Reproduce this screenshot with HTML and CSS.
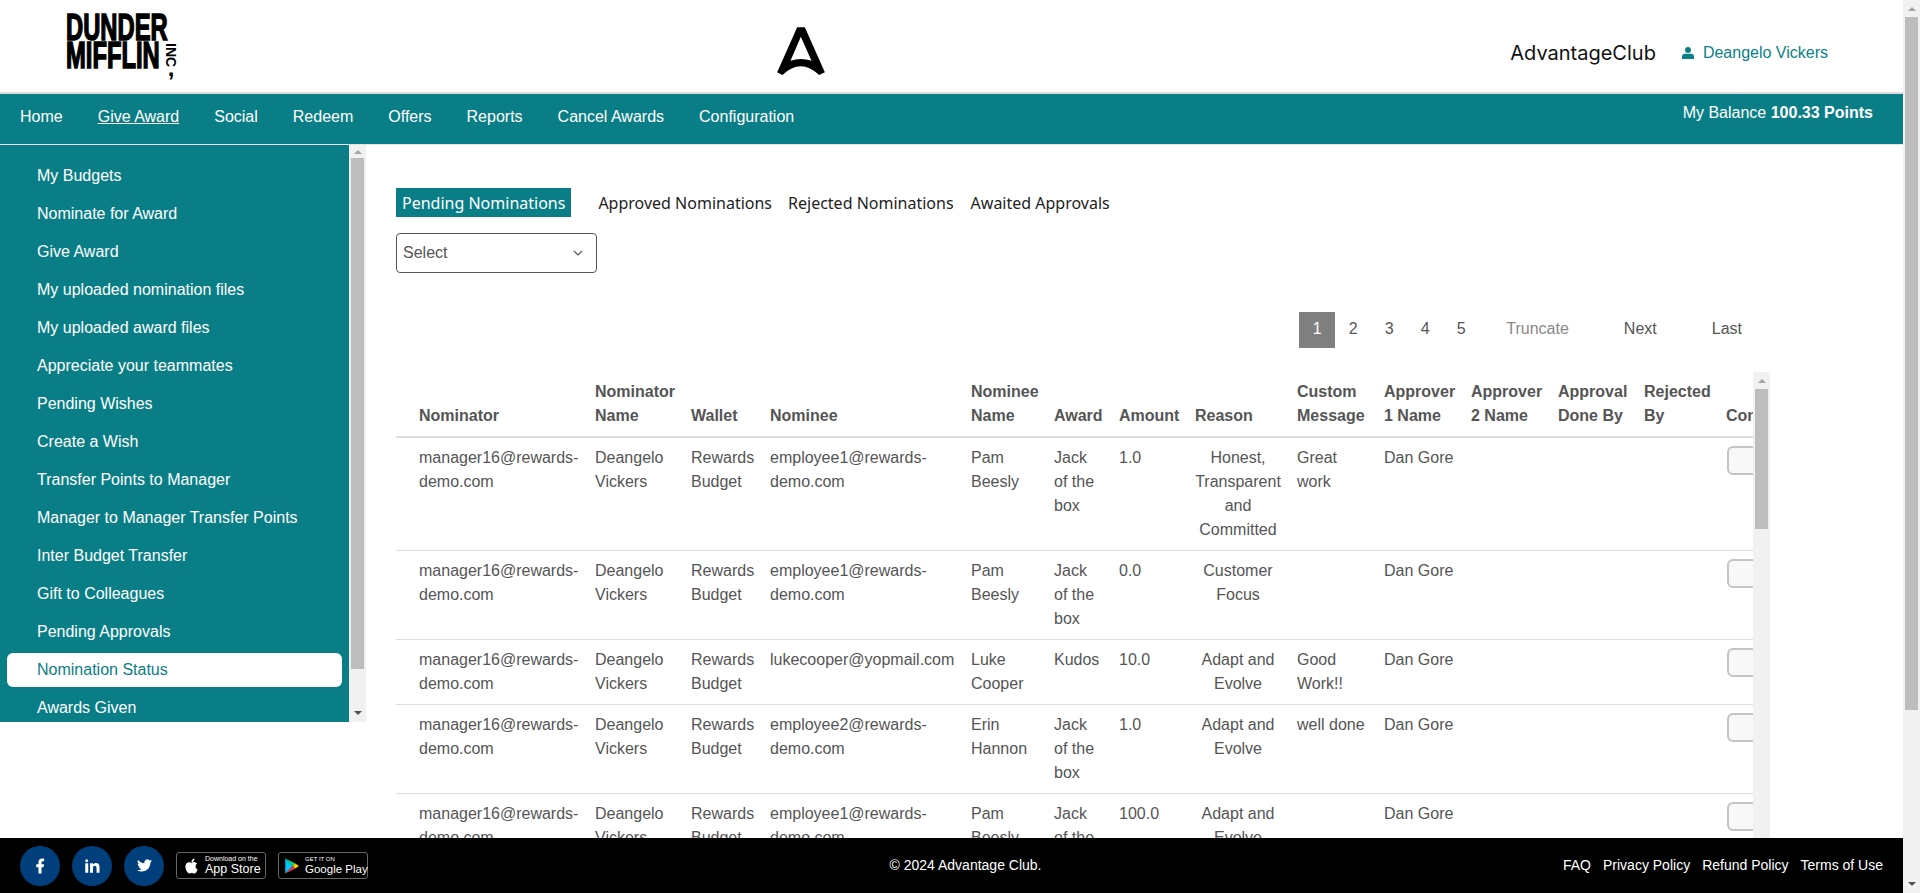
FILE: index.html
```html
<!DOCTYPE html>
<html lang="en">

<head>
    <meta charset="UTF-8">
    <meta name="viewport" content="width=device-width, initial-scale=1.0">
    <title>Nomination Status</title>
    <link rel="stylesheet" href="styles.css">
</head>

<body>
    <div class="page">
        <header class="top-bar">
            <div class="company-logo">
                <div class="company-words">
                    <span class="company-line">DUNDER MIFFLIN</span>
                </div>
                <div class="company-side">
                    <span class="company-inc">INC</span>
                    <span class="company-comma">,</span>
                </div>
            </div>
            <svg class="brand-mark" viewBox="40 40 170 165" aria-hidden="true">
                <path fill-rule="evenodd" d="M112 50H135L195 185L178 193Q150 167 123 167Q95 167 68 193L52 185ZM123 78L92 150Q123 140 155 150Z" />
            </svg>
            <div class="top-right">
                <span class="brand-name">AdvantageClub</span>
                <span class="user-name">
                    <svg class="user-icon" viewBox="0 0 12 12" aria-hidden="true">
                        <circle cx="6" cy="3" r="3" />
                        <path d="M0 12V9.500C0 7.800 1.300 6.700 3 6.700H9C10.700 6.700 12 7.800 12 9.500V12Z" />
                    </svg>
                    Deangelo Vickers
                </span>
            </div>
        </header>

        <nav class="main-nav">
            <div class="nav-links">
                <a>Home</a>
                <a class="current">Give Award</a>
                <a>Social</a>
                <a>Redeem</a>
                <a>Offers</a>
                <a>Reports</a>
                <a>Cancel Awards</a>
                <a>Configuration</a>
            </div>
            <div class="balance">My Balance <b>100.33 Points</b></div>
        </nav>

        <div class="content">
            <aside class="side">
                <ul class="side-menu">
                    <li>My Budgets</li>
                    <li>Nominate for Award</li>
                    <li>Give Award</li>
                    <li>My uploaded nomination files</li>
                    <li>My uploaded award files</li>
                    <li>Appreciate your teammates</li>
                    <li>Pending Wishes</li>
                    <li>Create a Wish</li>
                    <li>Transfer Points to Manager</li>
                    <li>Manager to Manager Transfer Points</li>
                    <li>Inter Budget Transfer</li>
                    <li>Gift to Colleagues</li>
                    <li>Pending Approvals</li>
                    <li class="active">Nomination Status</li>
                    <li>Awards Given</li>
                </ul>
                <div class="scrollbar side-scroll">
                    <span class="arrow-up"></span>
                    <span class="thumb"></span>
                    <span class="arrow-down"></span>
                </div>
            </aside>

            <main class="main">
                <div class="tabs">
                    <a class="tab active">Pending Nominations</a>
                    <a class="tab">Approved Nominations</a>
                    <a class="tab">Rejected Nominations</a>
                    <a class="tab">Awaited Approvals</a>
                </div>

                <div class="select-box">
                    <span>Select</span>
                    <svg class="chevron" viewBox="0 0 10 6" aria-hidden="true">
                        <path d="M1 1L5 5L9 1" />
                    </svg>
                </div>

                <div class="pager">
                    <a class="page-num on">1</a>
                    <a class="page-num">2</a>
                    <a class="page-num">3</a>
                    <a class="page-num">4</a>
                    <a class="page-num">5</a>
                    <a class="page-word truncate">Truncate</a>
                    <a class="page-word next">Next</a>
                    <a class="page-word last">Last</a>
                </div>

                <div class="table-box">
                    <div class="table-view">
                        <table class="noms">
                            <colgroup>
                                <col class="c1"><col class="c2"><col class="c3"><col class="c4"><col class="c5"><col class="c6"><col class="c7"><col class="c8"><col class="c9"><col class="c10"><col class="c11"><col class="c12"><col class="c13"><col class="c14">
                            </colgroup>
                            <thead>
                                <tr>
                                    <th>Nominator</th>
                                    <th>Nominator Name</th>
                                    <th>Wallet</th>
                                    <th>Nominee</th>
                                    <th>Nominee Name</th>
                                    <th>Award</th>
                                    <th>Amount</th>
                                    <th>Reason</th>
                                    <th>Custom Message</th>
                                    <th>Approver 1 Name</th>
                                    <th>Approver 2 Name</th>
                                    <th>Approval Done By</th>
                                    <th>Rejected By</th>
                                    <th>Confirm</th>
                                </tr>
                            </thead>
                            <tbody>
                                <tr>
                                    <td>manager16@rewards-demo.com</td>
                                    <td>Deangelo Vickers</td>
                                    <td>Rewards Budget</td>
                                    <td>employee1@rewards-demo.com</td>
                                    <td>Pam Beesly</td>
                                    <td>Jack of the box</td>
                                    <td>1.0</td>
                                    <td class="reason">Honest, Transparent and Committed</td>
                                    <td>Great work</td>
                                    <td>Dan Gore</td>
                                    <td></td>
                                    <td></td>
                                    <td></td>
                                    <td><button class="row-btn" aria-label="Confirm"></button></td>
                                </tr>
                                <tr>
                                    <td>manager16@rewards-demo.com</td>
                                    <td>Deangelo Vickers</td>
                                    <td>Rewards Budget</td>
                                    <td>employee1@rewards-demo.com</td>
                                    <td>Pam Beesly</td>
                                    <td>Jack of the box</td>
                                    <td>0.0</td>
                                    <td class="reason">Customer Focus</td>
                                    <td></td>
                                    <td>Dan Gore</td>
                                    <td></td>
                                    <td></td>
                                    <td></td>
                                    <td><button class="row-btn" aria-label="Confirm"></button></td>
                                </tr>
                                <tr>
                                    <td>manager16@rewards-demo.com</td>
                                    <td>Deangelo Vickers</td>
                                    <td>Rewards Budget</td>
                                    <td>lukecooper@yopmail.com</td>
                                    <td>Luke Cooper</td>
                                    <td>Kudos</td>
                                    <td>10.0</td>
                                    <td class="reason">Adapt and Evolve</td>
                                    <td>Good Work!!</td>
                                    <td>Dan Gore</td>
                                    <td></td>
                                    <td></td>
                                    <td></td>
                                    <td><button class="row-btn" aria-label="Confirm"></button></td>
                                </tr>
                                <tr>
                                    <td>manager16@rewards-demo.com</td>
                                    <td>Deangelo Vickers</td>
                                    <td>Rewards Budget</td>
                                    <td>employee2@rewards-demo.com</td>
                                    <td>Erin Hannon</td>
                                    <td>Jack of the box</td>
                                    <td>1.0</td>
                                    <td class="reason">Adapt and Evolve</td>
                                    <td>well done</td>
                                    <td>Dan Gore</td>
                                    <td></td>
                                    <td></td>
                                    <td></td>
                                    <td><button class="row-btn" aria-label="Confirm"></button></td>
                                </tr>
                                <tr>
                                    <td>manager16@rewards-demo.com</td>
                                    <td>Deangelo Vickers</td>
                                    <td>Rewards Budget</td>
                                    <td>employee1@rewards-demo.com</td>
                                    <td>Pam Beesly</td>
                                    <td>Jack of the box</td>
                                    <td>100.0</td>
                                    <td class="reason">Adapt and Evolve</td>
                                    <td></td>
                                    <td>Dan Gore</td>
                                    <td></td>
                                    <td></td>
                                    <td></td>
                                    <td><button class="row-btn" aria-label="Confirm"></button></td>
                                </tr>
                            </tbody>
                        </table>
                    </div>
                    <div class="scrollbar table-scroll">
                        <span class="arrow-up"></span>
                        <span class="thumb"></span>
                    </div>
                </div>
            </main>
        </div>

        <footer class="footer">
            <div class="footer-left">
                <a class="social">
                    <svg viewBox="0 0 24 24" aria-hidden="true"><path d="M14 13.500h2.500l1-4H14v-2c0-1.030 0-2 2-2h1.500V2.140c-.326-.043-1.557-.14-2.857-.14C11.928 2 10 3.657 10 6.700v2.800H7v4h3V22h4v-8.500z" /></svg>
                </a>
                <a class="social">
                    <svg viewBox="0 0 24 24" aria-hidden="true"><path d="M6.940 5a2 2 0 1 1-4-.002 2 2 0 0 1 4 .002zM7 8.480H3V21h4V8.480zm6.320 0H9.340V21h3.940v-6.570c0-3.660 4.770-4 4.770 0V21H22v-7.930c0-6.170-7.060-5.940-8.720-2.910l.04-1.680z" /></svg>
                </a>
                <a class="social bird">
                    <svg viewBox="0 0 24 24" aria-hidden="true"><path d="M23.953 4.570a10 10 0 01-2.825.775 4.958 4.958 0 002.163-2.723c-.951.555-2.005.959-3.127 1.184a4.920 4.920 0 00-8.384 4.482C7.690 8.095 4.067 6.130 1.640 3.162a4.822 4.822 0 00-.666 2.475c0 1.710.870 3.213 2.188 4.096a4.904 4.904 0 01-2.228-.616v.060a4.923 4.923 0 003.946 4.827 4.996 4.996 0 01-2.212.085 4.936 4.936 0 004.604 3.417 9.867 9.867 0 01-6.102 2.105c-.390 0-.779-.023-1.170-.067a13.995 13.995 0 007.557 2.209c9.053 0 13.998-7.496 13.998-13.985 0-.210 0-.420-.015-.630A9.935 9.935 0 0024 4.590z" /></svg>
                </a>
                <a class="store-badge apple">
                    <svg class="store-icon" viewBox="0 0 24 24" aria-hidden="true"><path fill="#fff" d="M12.152 6.896c-.948 0-2.415-1.078-3.960-1.040-2.040.027-3.910 1.183-4.961 3.014-2.117 3.675-.546 9.103 1.519 12.090 1.013 1.454 2.208 3.090 3.792 3.039 1.520-.065 2.090-.987 3.935-.987 1.831 0 2.350.987 3.960.948 1.637-.026 2.676-1.480 3.676-2.948 1.156-1.688 1.636-3.325 1.662-3.415-.039-.013-3.182-1.221-3.220-4.857-.026-3.040 2.480-4.494 2.597-4.559-1.429-2.090-3.623-2.324-4.390-2.376-2-.156-3.675 1.090-4.610 1.090zM15.530 3.830c.843-1.012 1.400-2.427 1.245-3.830-1.207.052-2.662.805-3.532 1.818-.780.896-1.454 2.338-1.273 3.714 1.338.104 2.715-.688 3.559-1.701" /></svg>
                    <span class="store-text">
                        <small>Download on the</small>
                        <strong>App Store</strong>
                    </span>
                </a>
                <a class="store-badge play">
                    <svg class="store-icon" viewBox="0 0 24 26" aria-hidden="true">
                        <path fill="#00c3ff" d="M2 1V25L14 13Z" />
                        <path fill="#00e076" d="M2 1L14 13L18 9Z" />
                        <path fill="#ffce00" d="M18 9L14 13L18 17L24 13Z" />
                        <path fill="#f0384a" d="M2 25L14 13L18 17Z" />
                    </svg>
                    <span class="store-text">
                        <small>GET IT ON</small>
                        <strong>Google Play</strong>
                    </span>
                </a>
            </div>
            <div class="copyright">© 2024 Advantage Club.</div>
            <div class="footer-links">
                <a>FAQ</a>
                <a>Privacy Policy</a>
                <a>Refund Policy</a>
                <a>Terms of Use</a>
            </div>
        </footer>
    </div>

    <div class="scrollbar page-scroll">
        <span class="arrow-up"></span>
        <span class="thumb"></span>
        <span class="arrow-down"></span>
    </div>
</body>

</html>
```

FILE: styles.css
```css
* {
    box-sizing: border-box;
}

body {
    margin: 0;
    height: 100vh;
    overflow: hidden;
    display: flex;
    font-family: "Liberation Sans", Arial, sans-serif;
    font-size: 16px;
    color: #555;
    background-color: #fff;
}

.page {
    flex: 1;
    min-width: 0;
    display: flex;
    flex-direction: column;
}

/* scrollbars are drawn, the browser hides real ones in the screenshot */
.scrollbar {
    width: 17px;
    flex-shrink: 0;
    display: flex;
    flex-direction: column;
    align-items: center;
    background-color: #f1f1f1;
}

.thumb {
    width: 13px;
    background-color: #bdbdbd;
}

.arrow-up,
.arrow-down {
    width: 0;
    height: 0;
    border-left: 4px solid transparent;
    border-right: 4px solid transparent;
}

.arrow-up {
    border-bottom: 4px solid #a3a3a3;
}

.arrow-down {
    border-top: 4px solid #505050;
    margin-top: auto;
}

.page-scroll .arrow-up {
    margin-top: 7px;
}

.page-scroll .thumb {
    margin-top: 6px;
    height: 693px;
}

.page-scroll .arrow-down {
    margin-bottom: 7px;
}

/* top bar */
.top-bar {
    height: 94px;
    flex-shrink: 0;
    border-bottom: 2px solid #ddd;
    display: flex;
    align-items: center;
    position: relative;
    padding-left: 66px;
}

.company-logo {
    display: flex;
    color: #000;
    width: 120px;
    height: 60px;
    margin-bottom: 5px;
}

.company-words {
    width: 97px;
}

.company-line {
    display: block;
    width: 170px;
    font-size: 36px;
    line-height: 28px;
    font-weight: 700;
    -webkit-text-stroke: 1.500px #000;
    transform: scaleX(0.66);
    transform-origin: left center;
}

.company-side {
    display: flex;
    flex-direction: column;
    align-items: center;
    width: 16px;
    padding-top: 29px;
}

.company-inc {
    font-size: 14px;
    line-height: 14px;
    font-weight: 700;
    writing-mode: vertical-rl;
}

.company-comma {
    font-size: 24px;
    line-height: 2px;
    font-weight: 700;
}

.brand-mark {
    width: 57px;
    height: 55px;
    position: absolute;
    left: 773px;
    top: 24px;
}

.top-right {
    margin-left: auto;
    display: flex;
    align-items: center;
    padding-right: 75px;
    margin-top: 14px;
}

.brand-name {
    font-family: Inter, "Liberation Sans", sans-serif;
    font-size: 20px;
    color: #111;
    margin-right: 26px;
}

.user-name {
    display: flex;
    align-items: center;
    color: #0a7f87;
}

.user-icon {
    width: 12px;
    height: 12px;
    fill: #0a7f87;
    margin-right: 9px;
}

/* nav */
.main-nav {
    height: 51px;
    flex-shrink: 0;
    display: flex;
    justify-content: space-between;
    background-color: #0a7e86;
    border-bottom: 1px solid #e4e4e4;
    color: #fff;
    padding: 11px 30px 0 20px;
}

.nav-links {
    display: flex;
    gap: 35px;
    line-height: 24px;
}

.nav-links .current {
    text-decoration: underline;
}

.balance {
    line-height: 17px;
    margin-top: -1px;
}

/* sidebar + main */
.content {
    flex: 1;
    min-height: 0;
    display: flex;
    overflow: hidden;
}

.side {
    width: 366px;
    height: 577px;
    flex-shrink: 0;
    display: flex;
}

.side-menu {
    flex: 1;
    margin: 0;
    list-style: none;
    padding: 14px 7px 0;
    background-color: #0a7e86;
    color: #fff;
    overflow: hidden;
}

.side-menu li {
    height: 34px;
    line-height: 34px;
    padding-left: 30px;
    margin-bottom: 4px;
    border-radius: 6px;
}

.side-menu .active {
    background-color: #fff;
    color: #0a7e86;
}

.side-scroll .arrow-up {
    margin-top: 5px;
}

.side-scroll .thumb {
    margin-top: 4px;
    height: 511px;
}

.side-scroll .arrow-down {
    margin-bottom: 7px;
}

.main {
    flex: 1;
    min-width: 0;
    padding: 43px 0 0 30px;
}

.tabs {
    display: flex;
    gap: 4px;
    height: 29px;
    font-family: "Noto Sans", sans-serif;
    font-size: 16px;
    line-height: 31px;
    color: #222;
}

.tab {
    padding: 0 6px;
}

.tab:last-child {
    margin-left: 1px;
}

.tab.active {
    background-color: #0a7e86;
    color: #fff;
    margin-right: 17px;
}

.select-box {
    width: 201px;
    height: 40px;
    margin-top: 16px;
    padding: 0 13px 0 6px;
    display: flex;
    align-items: center;
    justify-content: space-between;
    border: 1px solid #555;
    border-radius: 4px;
}

.chevron {
    width: 10px;
    height: 6px;
    fill: none;
    stroke: #555;
    stroke-width: 1.200;
}

.pager {
    display: flex;
    justify-content: flex-end;
    margin-top: 39px;
    height: 36px;
    padding-right: 161px;
    line-height: 33px;
}

.page-num {
    width: 36px;
    height: 36px;
    text-align: center;
}

.page-num.on {
    background-color: #808080;
    color: #fff;
}

.page-word.truncate {
    color: #888;
    margin-left: 27px;
}

.page-word.next {
    margin-left: 55px;
}

.page-word.last {
    margin-left: 55px;
}

.table-box {
    display: flex;
    margin-top: 24px;
    width: 1374px;
    height: 600px;
}

.table-view {
    flex: 1;
    min-width: 0;
    overflow: hidden;
}

.table-scroll .arrow-up {
    margin-top: 7px;
}

.table-scroll .thumb {
    margin-top: 6px;
    height: 140px;
}

.noms {
    table-layout: fixed;
    border-collapse: collapse;
    width: 1362px;
    line-height: 24px;
}

.c1 { width: 191px; }
.c2 { width: 96px; }
.c3 { width: 79px; }
.c4 { width: 201px; }
.c5 { width: 83px; }
.c6 { width: 65px; }
.c7 { width: 76px; }
.c8 { width: 102px; }
.c9 { width: 87px; }
.c10 { width: 87px; }
.c11 { width: 87px; }
.c12 { width: 86px; }
.c13 { width: 82px; }
.c14 { width: 100px; }

.noms th,
.noms td {
    padding: 8px;
    text-align: left;
    vertical-align: top;
}

.noms th {
    vertical-align: bottom;
    border-bottom: 2px solid #ddd;
}

.noms td {
    border-bottom: 1px solid #ddd;
}

.noms th:first-child,
.noms td:first-child {
    padding-left: 23px;
}

.noms .reason {
    text-align: center;
}

.row-btn {
    display: block;
    width: 80px;
    height: 29px;
    background-color: #f8f8f8;
    border: 2px solid #c4c4c4;
    border-radius: 6px;
    margin-left: 1px;
}

/* footer */
.footer {
    height: 55px;
    flex-shrink: 0;
    display: flex;
    align-items: center;
    justify-content: space-between;
    background-color: #000;
    color: #fff;
    font-size: 14px;
    padding: 0 20px;
}

.footer-left {
    display: flex;
    align-items: center;
}

.social {
    width: 40px;
    height: 40px;
    border-radius: 50%;
    background-color: #003f7c;
    margin-right: 12px;
    display: flex;
    align-items: center;
    justify-content: center;
}

.social svg {
    width: 18px;
    height: 18px;
    fill: #fff;
}

.social.bird svg {
    width: 15px;
    height: 15px;
}

.store-badge {
    width: 90px;
    height: 27px;
    border: 1px solid #666;
    border-radius: 3px;
    display: flex;
    align-items: center;
    padding-left: 7px;
}

.store-badge.apple {
    margin-right: 12px;
}

.store-badge.play {
    padding-left: 5px;
}

.store-icon {
    width: 15px;
    height: 18px;
    margin-right: 6px;
    flex-shrink: 0;
}

.store-text {
    display: flex;
    flex-direction: column;
    white-space: nowrap;
}

.store-text small {
    font-size: 7px;
    line-height: 8px;
}

.store-text strong {
    font-size: 12.500px;
    line-height: 13px;
    font-weight: 400;
}

.store-badge.play small {
    font-size: 6px;
}

.store-badge.play strong {
    font-size: 11.500px;
}

.copyright,
.footer-links {
    margin-bottom: 2px;
}

.footer-links {
    display: flex;
    gap: 12px;
}
```
